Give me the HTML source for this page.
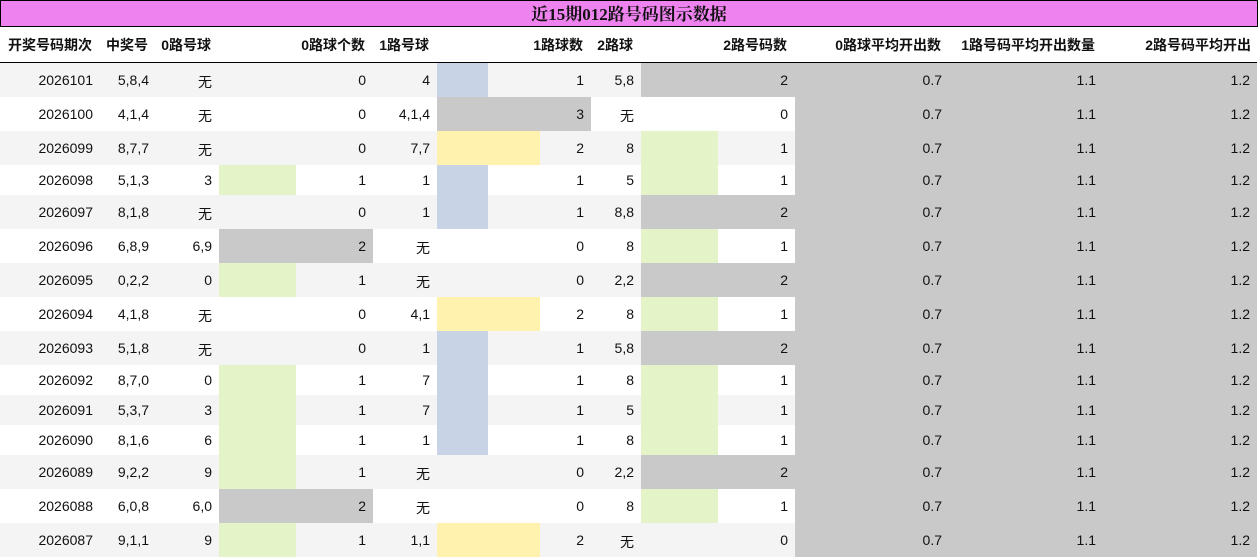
<!DOCTYPE html><html><head><meta charset="utf-8"><style>
body{margin:0;background:#fff;width:1258px;height:558px;overflow:hidden;font-family:"Liberation Sans","Noto Sans CJK SC",sans-serif;font-size:14px;color:#111}
.t{position:absolute;left:0;top:0;width:1256px;height:25px;background:#ee82ee;border:1px solid #000;text-align:center;font:bold 17px "Liberation Serif","Noto Serif CJK SC",serif;line-height:27px}
table{position:absolute;left:0;top:27px;border-collapse:collapse;table-layout:fixed;width:1257px}
td,th{padding:0 7px 0 0;text-align:right;white-space:nowrap;overflow:hidden}
th{height:35px;font-weight:bold;border-bottom:1px solid #000;padding-right:8px}
tr.a td{background-color:#f4f4f4}
td.g{background:#c9c9c9!important}
.h34{height:34px}.h30{height:30px}
.z{padding-top:4px}
</style></head><body>
<div class="t">近15期012路号码图示数据</div>
<table>
<colgroup><col style="width:100px"><col style="width:56px"><col style="width:63px"><col style="width:154px"><col style="width:64px"><col style="width:154px"><col style="width:50px"><col style="width:154px"><col style="width:154px"><col style="width:154px"><col style="width:154px"></colgroup>
<tr><th>开奖号码期次</th><th>中奖号</th><th>0路号球</th><th>0路球个数</th><th>1路号球</th><th>1路球数</th><th>2路球</th><th>2路号码数</th><th>0路球平均开出数</th><th>1路号码平均开出数量</th><th style="padding-right:6px">2路号码平均开出</th></tr>
<script>
var G='linear-gradient(to right,#e4f4c8 0 77px,transparent 77px)',B='linear-gradient(to right,#c8d4e6 0 51px,transparent 51px)',Y='linear-gradient(to right,#fff2ae 0 103px,transparent 103px)';
var rows=[
['2026101','5,8,4','无','0','4','1','5,8','2','',B,'g'],
['2026100','4,1,4','无','0','4,1,4','3','无','0','','g',''],
['2026099','8,7,7','无','0','7,7','2','8','1','',Y,G],
['2026098','5,1,3','3','1','1','1','5','1',G,B,G],
['2026097','8,1,8','无','0','1','1','8,8','2','',B,'g'],
['2026096','6,8,9','6,9','2','无','0','8','1','g','',G],
['2026095','0,2,2','0','1','无','0','2,2','2',G,'','g'],
['2026094','4,1,8','无','0','4,1','2','8','1','',Y,G],
['2026093','5,1,8','无','0','1','1','5,8','2','',B,'g'],
['2026092','8,7,0','0','1','7','1','8','1',G,B,G],
['2026091','5,3,7','3','1','7','1','5','1',G,B,G],
['2026090','8,1,6','6','1','1','1','8','1',G,B,G],
['2026089','9,2,2','9','1','无','0','2,2','2',G,'','g'],
['2026088','6,0,8','6,0','2','无','0','8','1','g','',G],
['2026087','9,1,1','9','1','1,1','2','无','0',G,Y,'']];
function c(v,bg){var cls='',st='';if(bg=='g')cls='g';else if(bg)st='background-image:'+bg;if(v=='无')cls+=' z';return '<td class="'+cls+'" style="'+st+'">'+v+'</td>';}
var h='';rows.forEach(function(r,i){var has=r.slice(0,8).indexOf('无')>=0;h+='<tr class="'+(i%2==0?'a ':'')+(has?'h34':'h30')+'">'+c(r[0])+c(r[1])+c(r[2])+c(r[3],r[8])+c(r[4])+c(r[5],r[9])+c(r[6])+c(r[7],r[10])+c('0.7','g')+c('1.1','g')+c('1.2','g')+'</tr>';});
document.write(h);
</script>
</table>
</body></html>
